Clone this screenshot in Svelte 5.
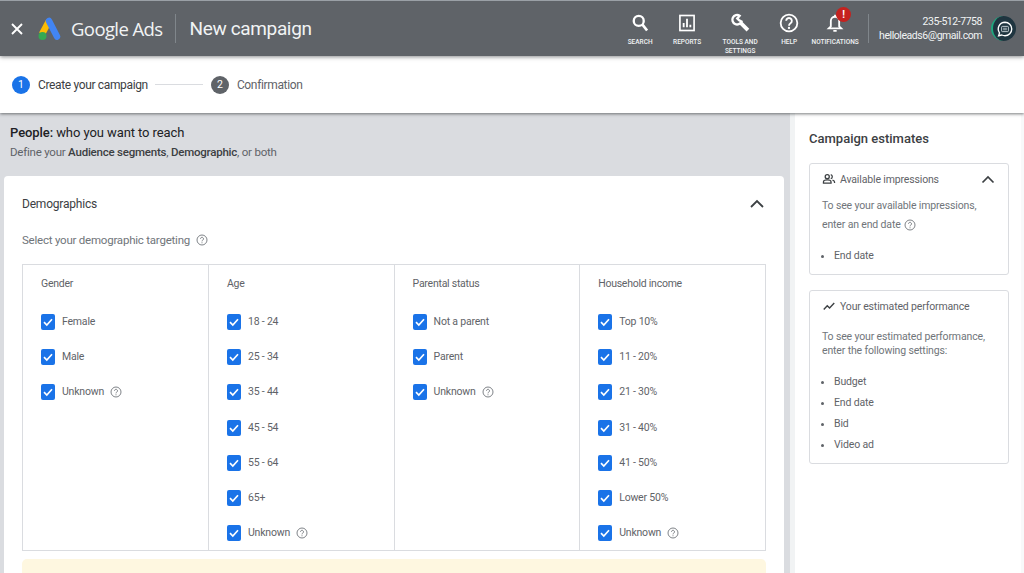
<script>
let tools = [
	{ label: 'SEARCH', w: 42, icon: 'search' },
	{ label: 'REPORTS', w: 52, icon: 'reports' },
	{ label: 'TOOLS AND SETTINGS', w: 54, icon: 'tools' },
	{ label: 'HELP', w: 44, icon: 'help' },
	{ label: 'NOTIFICATIONS', w: 48, icon: 'bell' }
]

let columns = [
	{ title: 'Gender', items: ['Female', 'Male', 'Unknown?'] },
	{ title: 'Age', items: ['18 - 24', '25 - 34', '35 - 44', '45 - 54', '55 - 64', '65+', 'Unknown?'] },
	{ title: 'Parental status', items: ['Not a parent', 'Parent', 'Unknown?'] },
	{ title: 'Household income', items: ['Top 10%', '11 - 20%', '21 - 30%', '31 - 40%', '41 - 50%', 'Lower 50%', 'Unknown?'] }
]
</script>

{#snippet help(size)}
	<svg class="help" width={size} height={size} viewBox="0 0 24 24">
		<circle cx="12" cy="12" r="10" fill="none" stroke="#70757a" stroke-width="1.8" />
		<path d="M9 9.6a3 3 0 1 1 4.6 2.5c-1 .7-1.6 1.2-1.6 2.6" fill="none" stroke="#70757a" stroke-width="1.8" />
		<circle cx="12" cy="17.4" r="1.1" fill="#70757a" />
	</svg>
{/snippet}

<div class="page">
	<header class="topbar">
		<svg class="close" width="12" height="12" viewBox="0 0 12 12">
			<path d="M1 1l10 10M11 1L1 11" stroke="#fff" stroke-width="1.9" />
		</svg>
		<svg class="logo" width="24" height="24" viewBox="0 0 24 24" fill="none">
			<path d="M11 4L4 17" stroke="#fbbc04" stroke-width="6.5" />
			<path d="M11 4l8 15.500" stroke="#4285f4" stroke-width="6.500" stroke-linecap="round" />
			<circle cx="4.500" cy="19" r="4" fill="#34a853" />
		</svg>
		<span class="brand">Google Ads</span>
		<span class="vline"></span>
		<span class="title">New campaign</span>

		<nav class="tools">
			{#each tools as t}
				<div class="tool" style="width:{t.w}px">
					<svg width="20" height="20" viewBox="0 0 24 24" fill="none">
						{#if t.icon === 'search'}
							<circle cx="10.500" cy="9.500" r="6" stroke="#fff" stroke-width="2.800" />
							<path d="M15 14l5.500 7" stroke="#fff" stroke-width="3.200" />
						{:else if t.icon === 'reports'}
							<rect x="3.500" y="3" width="17" height="18" stroke="#fff" stroke-width="2" />
							<path d="M8 17v-5M12 17V7M16 17v-3" stroke="#fff" stroke-width="2.200" />
						{:else if t.icon === 'tools'}
							<path d="M11.500 3.200a5.700 5.700 0 1 0 2.300 7L11 8.700 8.700 6.500z" stroke="#fff" stroke-width="2.800" />
							<path d="M12.500 11.500l9 9" stroke="#fff" stroke-width="4.600" />
						{:else if t.icon === 'help'}
							<circle cx="12" cy="12" r="10" stroke="#fff" stroke-width="2.200" />
							<path d="M8.600 9.400a3.400 3.400 0 1 1 5.200 2.900c-1.200.8-1.800 1.300-1.800 2.900" stroke="#fff" stroke-width="2.200" />
							<circle cx="12" cy="18" r="1.400" fill="#fff" />
						{:else}
							<path d="M12 4.500a5 5 0 0 0-5 5v6.500l-2.500 2.500h15L17 16V9.500a5 5 0 0 0-5-5z" stroke="#fff" stroke-width="2.200" />
							<path d="M10 21.500h4M12 2v2" stroke="#fff" stroke-width="2.200" />
						{/if}
					</svg>
					<span>{t.label}</span>
					{#if t.icon === 'bell'}
						<b class="alert">!</b>
					{/if}
				</div>
			{/each}
		</nav>

		<span class="vline short"></span>
		<div class="account">
			<span>235-512-7758</span>
			<span>helloleads6@gmail.com</span>
		</div>
		<div class="avatar">
			<svg width="18" height="18" viewBox="0 0 24 24" fill="none">
				<path d="M12 3a9 9 0 0 1 0 18c-1.600 0-3-.4-4.300-1L3.500 21l1.200-3.800A9 9 0 0 1 12 3z" stroke="#fff" stroke-width="1.800" />
				<rect x="7.500" y="8.500" width="9" height="7" rx="1" stroke="#cfd8dc" stroke-width="1.200" />
				<path d="M9.500 11h5M9.500 13h5" stroke="#cfd8dc" stroke-width="1" />
			</svg>
		</div>
	</header>

	<div class="stepper">
		<span class="num active">1</span>
		<span class="step first">Create your campaign</span>
		<span class="dash"></span>
		<span class="num">2</span>
		<span class="step">Confirmation</span>
	</div>

	<div class="body">
		<main class="left">
			<h2><b>People:</b> who you want to reach</h2>
			<p class="sub">Define your <b>Audience segments</b>, <b>Demographic</b>, or both</p>

			<section class="card">
				<div class="card-head">
					<span>Demographics</span>
					<svg width="16" height="10" viewBox="0 0 16 10">
						<path d="M2 8l6-6 6 6" fill="none" stroke="#3c4043" stroke-width="1.800" />
					</svg>
				</div>
				<div class="hint">Select your demographic targeting {@render help(12)}</div>

				<div class="grid">
					{#each columns as col}
						<div class="col">
							<div class="col-title">{col.title}</div>
							{#each col.items as item}
								<div class="row">
									<span class="check">
										<svg width="14" height="14" viewBox="0 0 14 14">
											<path d="M3 7.200l2.800 2.800L11 4.300" fill="none" stroke="#fff" stroke-width="1.700" />
										</svg>
									</span>
									{#if item.endsWith('?')}
										{item.slice(0, -1)} {@render help(12)}
									{:else}
										{item}
									{/if}
								</div>
							{/each}
						</div>
					{/each}
				</div>
				<div class="note"></div>
			</section>
		</main>

		<aside class="side">
			<h3>Campaign estimates</h3>
			<div class="panel">
				<div class="panel-head">
					<svg width="14" height="14" viewBox="0 0 24 24" fill="none">
						<circle cx="9" cy="8" r="3.500" stroke="#3c4043" stroke-width="2.200" />
						<path d="M2.500 19v-2c0-2 3-3.500 6.500-3.500s6.500 1.500 6.500 3.500v2z" stroke="#3c4043" stroke-width="2.200" />
						<path d="M15 4.600a3.500 3.500 0 0 1 0 6.800M18 14c2 .6 3.500 1.600 3.500 3v2" stroke="#3c4043" stroke-width="2.200" />
					</svg>
					<span>Available impressions</span>
					<svg class="chev" width="14" height="9" viewBox="0 0 14 9">
						<path d="M1.500 7.500L7 2l5.500 5.500" fill="none" stroke="#3c4043" stroke-width="1.700" />
					</svg>
				</div>
				<p class="loose">To see your available impressions, enter an end date {@render help(12)}</p>
				<ul class="one">
					<li>End date</li>
				</ul>
			</div>

			<div class="panel second">
				<div class="panel-head">
					<svg width="14" height="14" viewBox="0 0 24 24" fill="none">
						<path d="M3 18l6-6.500 4 4L21 7" stroke="#3c4043" stroke-width="2.400" />
					</svg>
					<span>Your estimated performance</span>
				</div>
				<p class="tight">To see your estimated performance, enter the following settings:</p>
				<ul>
					<li>Budget</li>
					<li>End date</li>
					<li>Bid</li>
					<li>Video ad</li>
				</ul>
			</div>
		</aside>
	</div>
</div>

<style>
	:global(body) {
		margin: 0;
		overflow: hidden;
	}

	.page {
		width: 1024px;
		height: 573px;
		overflow: hidden;
		display: flex;
		flex-direction: column;
		font-family: Roboto, "Liberation Sans", sans-serif;
		color: #5f6368;
		background: #fff;
	}

	.topbar {
		height: 56px;
		flex: none;
		display: flex;
		align-items: center;
		box-sizing: border-box;
		border-top: 1px solid #9aa0a6;
		background: #5f6368;
		color: #fff;
		padding-left: 11px;
		position: relative;
		z-index: 2;
		box-shadow: 0 1px 4px rgba(60, 64, 67, 0.6);
	}

	.logo {
		margin-left: 15px;
	}

	.brand {
		font-family: "Open Sans", Roboto, sans-serif;
		font-size: 18.500px;
		letter-spacing: -0.600px;
		margin-left: 9px;
		color: #f1f3f4;
	}

	.vline {
		width: 1px;
		height: 29px;
		background: #80868b;
		margin-left: 13px;
	}

	.vline.short {
		margin-left: 0;
	}

	.title {
		font-size: 19px;
		letter-spacing: -0.350px;
		margin-left: 13px;
		color: #f1f3f4;
	}

	.tools {
		display: flex;
		margin-left: auto;
		margin-right: 9px;
		align-self: flex-start;
		padding-top: 12px;
	}

	.tool {
		position: relative;
		display: flex;
		flex-direction: column;
		align-items: center;
		font-size: 6.500px;
		font-weight: 500;
		line-height: 9px;
		text-align: center;
		color: #f1f3f4;
	}

	.tool span {
		margin-top: 5px;
	}

	.alert {
		position: absolute;
		left: 25px;
		top: -6px;
		width: 15px;
		height: 15px;
		border-radius: 50%;
		background: #c5221f;
		color: #fff;
		font-size: 10px;
		line-height: 15px;
	}

	.account {
		display: flex;
		flex-direction: column;
		align-items: flex-end;
		font-size: 10.500px;
		letter-spacing: -0.450px;
		line-height: 14px;
		margin-left: 10px;
		color: #f1f3f4;
	}

	.avatar {
		width: 25px;
		height: 25px;
		margin: 0 8px 0 9px;
		border-radius: 50%;
		background: #1f3540;
		border-left: 2px solid #1fa87f;
		box-sizing: border-box;
		display: flex;
		align-items: center;
		justify-content: center;
	}

	.stepper {
		height: 57px;
		flex: none;
		display: flex;
		align-items: center;
		padding-left: 12px;
		box-sizing: border-box;
		font-size: 12px;
		letter-spacing: -0.350px;
		position: relative;
		z-index: 1;
		background: #fff;
		box-shadow: 0 1px 3px rgba(60, 64, 67, 0.7);
	}

	.num {
		width: 18px;
		height: 18px;
		border-radius: 50%;
		background: #5f6368;
		color: #fff;
		font-size: 10.500px;
		text-align: center;
		line-height: 18px;
		letter-spacing: 0;
	}

	.num.active {
		background: #1a73e8;
	}

	.step {
		margin-left: 8px;
	}

	.step.first {
		color: #3c4043;
	}

	.dash {
		width: 48px;
		height: 1px;
		background: #dadce0;
		margin: 0 8px 0 7px;
	}

	.body {
		flex: 1;
		display: flex;
		min-height: 0;
		background: #dadce0;
	}

	.left {
		width: 790px;
		flex: none;
		padding-top: 12px;
		box-sizing: border-box;
	}

	h2 {
		margin: 0 0 0 10px;
		font-size: 13px;
		font-weight: 400;
		letter-spacing: -0.080px;
		line-height: 16px;
		color: #202124;
	}

	h2 b {
		font-weight: 500;
	}

	.sub {
		margin: 4px 0 0 10px;
		font-size: 11.500px;
		letter-spacing: -0.220px;
		line-height: 15px;
		color: #5f6368;
	}

	.sub b {
		font-weight: 500;
		color: #3c4043;
	}

	.card {
		margin: 16px 0 0 4px;
		width: 780px;
		background: #fff;
		border-radius: 4px 4px 0 0;
		padding: 0 18px;
		box-sizing: border-box;
	}

	.card-head {
		height: 55px;
		display: flex;
		align-items: center;
		justify-content: space-between;
		padding-right: 1px;
		font-size: 12px;
		letter-spacing: -0.200px;
		color: #3c4043;
	}

	.hint {
		display: flex;
		align-items: center;
		gap: 6px;
		height: 20px;
		margin-top: -1px;
		font-size: 11.500px;
		letter-spacing: -0.220px;
		color: #70757a;
	}

	.grid {
		margin-top: 14px;
		display: flex;
		height: 287px;
		box-sizing: border-box;
		border: 1px solid #dadce0;
	}

	.col {
		width: 185.600px;
		flex: none;
		box-sizing: border-box;
		border-left: 1px solid #dadce0;
		padding: 12px 0 0 18px;
	}

	.col:first-child {
		width: 185px;
		border-left: none;
	}

	.col-title {
		height: 14px;
		font-size: 10.500px;
		letter-spacing: -0.250px;
		line-height: 14px;
		color: #5f6368;
		margin-bottom: 23px;
	}

	.row {
		height: 35.200px;
		display: flex;
		align-items: flex-start;
		gap: 7px;
		font-size: 10.500px;
		letter-spacing: -0.200px;
		line-height: 16px;
		color: #5f6368;
	}

	.check {
		width: 14px;
		height: 16px;
		flex: none;
		border-radius: 2px;
		background: #1a73e8;
		display: flex;
		align-items: center;
		justify-content: center;
	}

	.help {
		flex: none;
	}

	.row .help {
		margin-top: 2px;
		margin-left: -1px;
	}

	.note {
		margin-top: 8px;
		height: 30px;
		border-radius: 5px;
		background: #fef7e0;
	}

	.side {
		flex: 1;
		background: #fff;
		border-left: 5px solid #f1f3f4;
		border-right: 3px solid #f8f9fa;
		padding: 17px 12px 0 14px;
		box-sizing: border-box;
	}

	h3 {
		margin: 0;
		font-size: 13px;
		font-weight: 500;
		line-height: 18px;
		color: #3c4043;
	}

	.panel {
		margin-top: 15px;
		border: 1px solid #dadce0;
		border-radius: 3px;
		padding: 0 6px 0 12px;
		font-size: 10.500px;
		letter-spacing: -0.150px;
		color: #70757a;
	}

	.panel.second {
		margin-top: 15px;
		padding-right: 12px;
	}

	.panel-head {
		height: 30px;
		display: flex;
		align-items: center;
		gap: 4px;
		color: #5f6368;
		font-size: 10.500px;
		letter-spacing: -0.150px;
	}

	.chev {
		margin-left: auto;
		margin-right: 7px;
	}

	p {
		margin: 0;
	}

	.loose {
		margin-top: 2px;
		line-height: 19px;
	}

	.loose .help {
		vertical-align: -3px;
		margin-left: 1px;
	}

	.tight {
		margin-top: 9px;
		line-height: 14px;
	}

	ul {
		margin: 13px 0 0;
		padding: 0 0 8px 12px;
		color: #5f6368;
		line-height: 21px;
	}

	ul.one {
		margin-top: 11px;
	}
</style>
